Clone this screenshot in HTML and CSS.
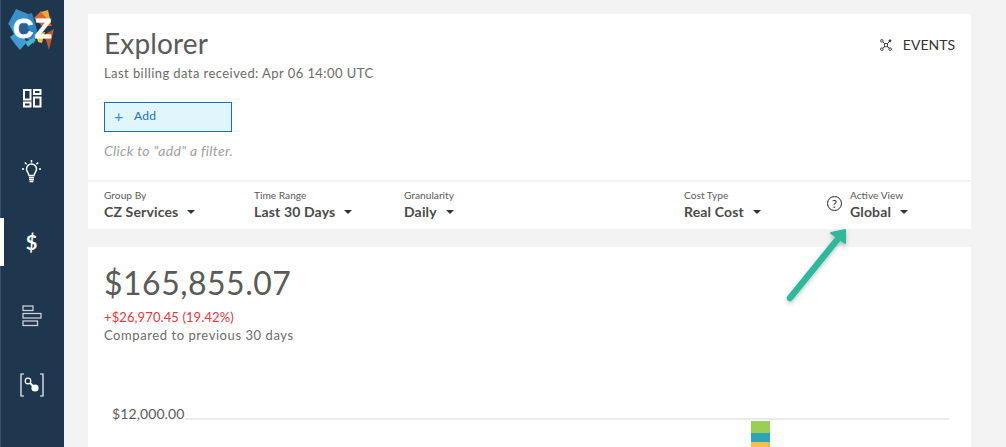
FILE: index.html
```html
<!DOCTYPE html>
<html lang="en">
<head>
<meta charset="utf-8">
<title>Explorer</title>
<link rel="stylesheet" href="styles.css">
</head>
<body>
<div class="app">
  <nav class="sidebar">
    <div class="logo">
      <svg width="63" height="56" viewBox="1 0 63 56">
        <polygon points="16,9 8,24 16,30 30,22 28,14" fill="#3d8fc9"/>
        <polygon points="28,14 32,13 37,30 34,44 26,38" fill="#2f86bd"/>
        <polygon points="9,24 14,34 10,37 15,44 20,50 27,42 18,30" fill="#3f9bd0"/>
        <polygon points="25,42 33,38 36,40 28,47" fill="#45b3cc"/>
        <polygon points="18,24 27,24 30,33 25,38 18,35" fill="#2a5f92"/>
        <polygon points="34,18 41,11 46,16 52,26 42,26" fill="#d9652a"/>
        <polygon points="41,12 48,10 51,23" fill="#f0a83a"/>
        <polygon points="36,34 45,32 42,43 38,42" fill="#f2c13c"/>
        <polygon points="42,36 54,29 49,50 46,40" fill="#c9562a"/>
        <text x="23" y="38" class="logo-text">C</text>
        <text x="43" y="38" class="logo-text">Z</text>
      </svg>
    </div>
    <a class="nav-item nav-dash">
      <svg width="20" height="20" viewBox="0 0 20 20" fill="none" stroke="#fff" stroke-width="2">
        <rect x="2" y="2" width="6.500" height="9.500"/><rect x="12" y="2" width="6.500" height="4"/>
        <rect x="2" y="14.500" width="6.500" height="4"/><rect x="12" y="9.500" width="6.500" height="9"/>
      </svg>
    </a>
    <a class="nav-item nav-bulb">
      <svg width="20" height="24" viewBox="0 0 20 24" fill="none" stroke="#fff" stroke-width="1.500">
        <path d="M7 15.500C6.500 12.500 4.500 11.500 4.500 9a5 5 0 0 1 10 0c0 2.500-2 3.500-2.500 6.500z"/>
        <path d="M7 17.500h5M7 19.500h5M7.500 21.500h4"/>
        <path d="M9.500 0v2.500M2.800 2.500l1.800 1.800M16.200 2.500l-1.800 1.800M0 9h2M17 9h2"/>
      </svg>
    </a>
    <a class="nav-item nav-cost active">$</a>
    <a class="nav-item nav-bars">
      <svg width="20" height="22" viewBox="0 0 20 22" fill="none" stroke="#c9d0d6" stroke-width="1.300">
        <rect x="1" y="1" width="10" height="4.500"/><rect x="1" y="8.500" width="18" height="4.500"/><rect x="1" y="16" width="14.500" height="4.500"/>
      </svg>
    </a>
    <a class="nav-item nav-graph">
      <svg width="24" height="24" viewBox="0 0 24 24" fill="none" stroke="#fff" stroke-width="1.200">
        <path d="M4 1H1v22h3M20 1h3v22h-3"/>
        <circle cx="8" cy="8" r="2.800"/>
        <path d="M10 10l4 4" stroke-width="1.800"/>
        <circle cx="15" cy="15" r="3" fill="#fff"/>
      </svg>
    </a>
  </nav>
  <main class="main">
    <section class="card top-card">
      <div class="head">
        <div class="head-row">
          <div>
            <h1 class="title">Explorer</h1>
            <p class="subtitle">Last billing data received: Apr 06 14:00 UTC</p>
          </div>
          <div class="events">
            <svg width="12" height="12" viewBox="0 0 13 13" fill="none" stroke="#333" stroke-width="1">
              <circle cx="2" cy="2" r="1.400"/><circle cx="10.800" cy="2" r="1.100" fill="#333"/>
              <circle cx="2" cy="11" r="1.400"/><circle cx="11" cy="11" r="1.400"/>
              <rect x="4.800" y="5" width="3.400" height="3.400"/>
              <path d="M3 3l2 2M10 3L8 5M3 10l2-2M10 10L8 8"/>
            </svg>
            <span>EVENTS</span>
          </div>
        </div>
        <button class="add"><span class="plus">+</span><span>Add</span></button>
        <p class="hint">Click to "add" a filter.</p>
      </div>
      <div class="filters">
        <div class="filter f-group"><label>Group By</label><div class="val">CZ Services<i class="caret"></i></div></div>
        <div class="filter f-time"><label>Time Range</label><div class="val">Last 30 Days<i class="caret"></i></div></div>
        <div class="filter f-gran"><label>Granularity</label><div class="val">Daily<i class="caret"></i></div></div>
        <div class="filter f-cost"><label>Cost Type</label><div class="val">Real Cost<i class="caret"></i></div></div>
        <div class="help">?</div>
        <div class="filter f-view"><label>Active View</label><div class="val">Global<i class="caret"></i></div></div>
      </div>
    </section>
    <section class="card chart-card">
      <div class="total">$165,855.07</div>
      <div class="delta">+$26,970.45 (19.42%)</div>
      <div class="compare">Compared to previous 30 days</div>
      <div class="chart">
        <span class="tick">$12,000.00</span>
        <div class="plot">
          <div class="bar"><i class="s1"></i><i class="s2"></i><i class="s3"></i></div>
        </div>
      </div>
    </section>
  </main>
  <svg class="arrow" width="80" height="90" viewBox="0 0 80 90">
    <defs><filter id="sh" x="-30%" y="-30%" width="160%" height="160%"><feDropShadow dx="0" dy="2" stdDeviation="2" flood-color="#000" flood-opacity=".25"/></filter></defs>
    <g filter="url(#sh)">
      <path d="M8 71L55 13" stroke="#2fb99d" stroke-width="6.500" stroke-linecap="round" fill="none"/>
      <polygon points="49,6 63,3 63,16" fill="#2fb99d" stroke="#2fb99d" stroke-width="2" stroke-linejoin="round"/>
    </g>
  </svg>
</div>
</body>
</html>
```
FILE: styles.css
```css
* { box-sizing: border-box; }
html, body { margin: 0; height: 447px; overflow: hidden; }
body { font-family: "Lato", "Open Sans", sans-serif; color: #4a4a4a; background: #f3f3f3; }
.app { display: flex; height: 447px; position: relative; overflow: hidden; }

.sidebar { width: 64px; flex: none; background: #1e364e; border-left: 1px solid #3a5064; display: flex; flex-direction: column; align-items: center; }
.logo { height: 56px; width: 100%; flex: none; }
.logo svg { display: block; overflow: visible; }
.logo-text { font-family: "Liberation Sans", sans-serif; font-weight: 700; font-size: 28px; fill: #fff; stroke: #fff; stroke-width: .8px; text-anchor: middle; }
.nav-item { display: flex; align-items: center; justify-content: center; height: 48px; flex: none; color: #fff; margin-left: -1px; width: 64px; }
.nav-dash { margin-top: 18px; }
.nav-bulb { margin-top: 26px; }
.nav-cost { margin-top: 22px; font-size: 20px; font-weight: 700; border-left: 4px solid #fff; padding-right: 5px; }
.nav-bars { margin-top: 26px; }
.nav-graph { margin-top: 21px; }

.main { flex: 1; padding: 14px 35px 0 24px; min-width: 0; }
.card { background: #fff; }
.top-card { height: 215px; display: flex; flex-direction: column; }
.head { height: 166px; padding: 0 16px; flex: none; }
.head-row { display: flex; justify-content: space-between; align-items: flex-start; }
.title { margin: 0; padding-top: 11px; font-size: 28px; line-height: 36px; font-weight: 400; color: #5a5a5a; letter-spacing: .15px; }
.subtitle { margin: 3px 0 0; font-size: 13px; line-height: 18px; color: #6b6b6b; letter-spacing: .43px; }
.events { display: flex; align-items: center; gap: 11px; font-size: 14px; color: #333; margin: 22px 0 0 0; height: 17px; }
.add { display: flex; align-items: center; width: 128px; height: 30px; margin: 20px 0 0; padding: 0 0 3px 9px; background: #e1f5fd; border: 1px solid #1a6fb3; font: inherit; font-size: 12px; color: #1a73bd; letter-spacing: .3px; }
.plus { width: 20px; font-size: 16px; line-height: 16px; text-align: left; color: #3f8fd0; }
.hint { margin: 10px 0 0; font-size: 14px; line-height: 18px; font-style: italic; color: #a0a0a0; letter-spacing: .32px; }

.filters { flex: 1; display: flex; align-items: flex-start; padding: 7px 0 0 16px; border-top: 2px solid #f3f3f3; }
.filter label { display: block; font-size: 10.200px; line-height: 12px; color: #5a5a5a; }
.val { display: flex; align-items: center; margin-top: 1px; font-size: 14px; line-height: 20px; font-weight: 700; color: #4a4a4a; letter-spacing: .15px; }
.caret { width: 0; height: 0; margin-left: 9px; border: 4.500px solid transparent; border-top: 4.500px solid #333; border-bottom: 0; }
.f-group { width: 150px; }
.f-time { width: 150px; }
.f-gran { width: 280px; }
.f-cost { width: 143px; }
.help { width: 15px; height: 15px; margin: 7px 8px 0 0; border: 1px solid #222; border-radius: 50%; font-size: 11px; line-height: 13px; text-align: center; color: #222; }

.chart-card { margin-top: 18px; height: 220px; padding: 16px 16px 0; }
.total { font-size: 32px; line-height: 40px; color: #5a5a5a; letter-spacing: .5px; }
.delta { margin-top: 6px; font-size: 13px; line-height: 16px; color: #e0393e; letter-spacing: .1px; }
.compare { margin-top: 2px; font-size: 13px; line-height: 17px; color: #6b6b6b; letter-spacing: .57px; }
.chart { display: flex; align-items: flex-start; margin: 62px 0 0 8px; }
.tick { font-size: 14px; line-height: 16px; color: #5a5a5a; width: 73px; flex: none; letter-spacing: .1px; }
.plot { width: 764px; margin-top: 12px; border-top: 2px solid #ebebeb; position: relative; }
.bar { width: 19px; margin: 1px 0 0 566px; display: flex; flex-direction: column; }
.bar i { display: block; }
.s1 { height: 12px; background: #9bcf53; }
.s2 { height: 9px; background: #2ba6b8; }
.s3 { height: 8px; background: #f6bd4b; }

.arrow { position: absolute; left: 782px; top: 227px; overflow: visible; }
```
